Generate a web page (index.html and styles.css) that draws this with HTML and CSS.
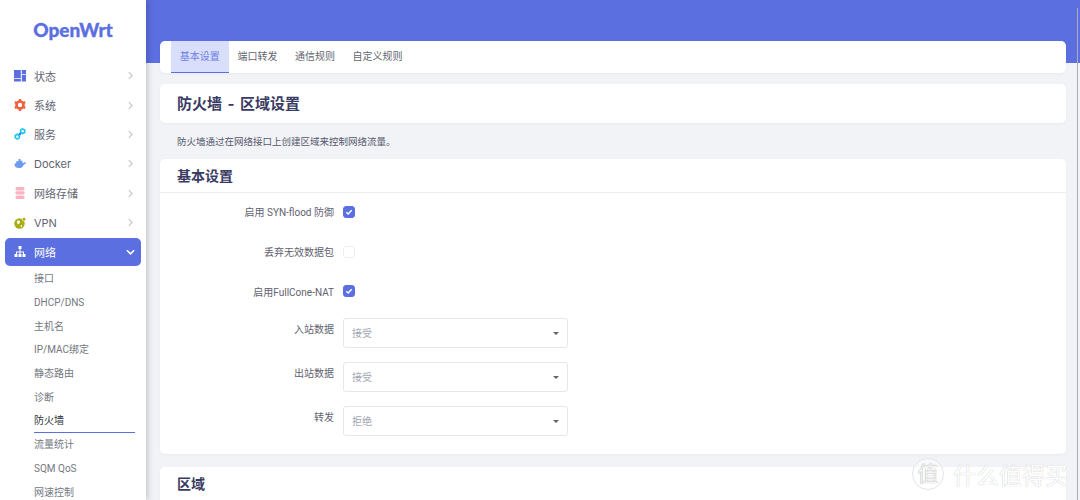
FILE: index.html
```html
<!DOCTYPE html>
<html lang="zh-CN">
<head>
    <meta charset="UTF-8">
    <meta name="viewport" content="width=device-width, initial-scale=1.0">
    <title>防火墙 - 区域设置 - OpenWrt</title>
    <link rel="stylesheet" href="styles.css">
</head>
<body>
    <aside class="sidebar">
        <div class="logo">OpenWrt</div>
        <ul class="menu">
            <li class="menu-item">
                <svg class="menu-icon" viewBox="0 0 12 12"><path fill="#5b6fe0" d="M0 0h6.800v8H0zM7.800 0H12v4H7.800zM7.800 4.800H12V11.500H7.800zM0 8.800h6.800v2.700H0z"/></svg>
                <span>状态</span>
                <svg class="chevron" viewBox="0 0 6 10"><path d="M1 1l4 4-4 4" fill="none" stroke="#c3c8d2" stroke-width="1.500"/></svg>
            </li>
            <li class="menu-item">
                <svg class="menu-icon" viewBox="0 0 12 12"><circle cx="6" cy="6" r="3.500" fill="none" stroke="#f2603c" stroke-width="2.600"/><path stroke="#f2603c" stroke-width="2.200" d="M6 0v2.500M6 9.500V12M0.800 3l2.200 1.300M9 7.700l2.200 1.300M0.800 9L3 7.700M9 4.300L11.200 3"/></svg>
                <span>系统</span>
                <svg class="chevron" viewBox="0 0 6 10"><path d="M1 1l4 4-4 4" fill="none" stroke="#c3c8d2" stroke-width="1.500"/></svg>
            </li>
            <li class="menu-item">
                <svg class="menu-icon" viewBox="0 0 12 12"><g fill="none" stroke="#22c8ec" stroke-width="1.700"><path d="M8.700.9l2 1.200v2.300l-2 1.200-2-1.200V2.100z"/><path d="M3.300 6.300l2 1.200v2.300l-2 1.200-2-1.200V7.500z"/></g><circle cx="6" cy="6" r="1.300" fill="#3b7de8"/></svg>
                <span>服务</span>
                <svg class="chevron" viewBox="0 0 6 10"><path d="M1 1l4 4-4 4" fill="none" stroke="#c3c8d2" stroke-width="1.500"/></svg>
            </li>
            <li class="menu-item">
                <svg class="menu-icon" viewBox="0 0 12 12"><path fill="#6b9bf0" d="M4.500 1h2v1.800h2V5h1c.4-.7 1.200-1 2.500-.6-.3 1.300-1 2-2.200 2C9.300 8.800 7.300 10 5 10 2 10 .5 8.500.3 5.500h1.900V3.200h2.300z"/></svg>
                <span>Docker</span>
                <svg class="chevron" viewBox="0 0 6 10"><path d="M1 1l4 4-4 4" fill="none" stroke="#c3c8d2" stroke-width="1.500"/></svg>
            </li>
            <li class="menu-item">
                <svg class="menu-icon" viewBox="0 0 12 12"><g fill="#f7b3c2"><rect x="1.500" y="0" width="9" height="3.400" rx="1.500"/><rect x="1.500" y="4.200" width="9" height="3.400" rx="1"/><rect x="1.500" y="8.400" width="9" height="3.600" rx="1.500"/></g></svg>
                <span>网络存储</span>
                <svg class="chevron" viewBox="0 0 6 10"><path d="M1 1l4 4-4 4" fill="none" stroke="#c3c8d2" stroke-width="1.500"/></svg>
            </li>
            <li class="menu-item">
                <svg class="menu-icon" viewBox="0 0 12 12"><circle cx="5.500" cy="6.500" r="5.200" fill="#a8ad14"/><path fill="#fff" d="M3 3.500l3 .5-.5 2.500-2 1zM6.500 8l2 .5-1.500 2z"/><circle cx="10" cy="2.200" r="1.800" fill="#a8ad14" stroke="#fff" stroke-width=".6"/></svg>
                <span>VPN</span>
                <svg class="chevron" viewBox="0 0 6 10"><path d="M1 1l4 4-4 4" fill="none" stroke="#c3c8d2" stroke-width="1.500"/></svg>
            </li>
            <li class="menu-item active">
                <svg class="menu-icon" viewBox="0 0 12 12"><path fill="#fff" d="M4.500 0h3v3h-3zM5.500 3h1v2.500H10V8H9V6.500H6.500V8h-1V6.500H3V8H2V5.500h3.500zM0.500 8h3v3h-3zM4.500 8h3v3h-3zM8.500 8h3v3h-3z"/></svg>
                <span>网络</span>
                <svg class="chevron" viewBox="0 0 10 6"><path d="M1 1l4 4 4-4" fill="none" stroke="#fff" stroke-width="1.800"/></svg>
            </li>
        </ul>
        <ul class="submenu">
            <li>接口</li>
            <li>DHCP/DNS</li>
            <li>主机名</li>
            <li>IP/MAC绑定</li>
            <li>静态路由</li>
            <li>诊断</li>
            <li class="current">防火墙</li>
            <li>流量统计</li>
            <li>SQM QoS</li>
            <li>网速控制</li>
        </ul>
    </aside>

    <main class="main">
        <nav class="card tabs">
            <a class="tab selected">基本设置</a>
            <a class="tab">端口转发</a>
            <a class="tab">通信规则</a>
            <a class="tab">自定义规则</a>
        </nav>

        <h1 class="card page-title">防火墙 - 区域设置</h1>
        <p class="page-desc">防火墙通过在网络接口上创建区域来控制网络流量。</p>

        <section class="card settings">
            <h2 class="section-title">基本设置</h2>
            <div class="form">
                <div class="row check-row">
                    <label class="row-label">启用 SYN-flood 防御</label>
                    <span class="checkbox checked"><svg viewBox="0 0 12 12"><path d="M2.800 6.200l2.200 2.200 4.200-4.600" fill="none" stroke="#fff" stroke-width="1.800"/></svg></span>
                </div>
                <div class="row check-row">
                    <label class="row-label">丢弃无效数据包</label>
                    <span class="checkbox"></span>
                </div>
                <div class="row check-row">
                    <label class="row-label">启用FullCone-NAT</label>
                    <span class="checkbox checked"><svg viewBox="0 0 12 12"><path d="M2.800 6.200l2.200 2.200 4.200-4.600" fill="none" stroke="#fff" stroke-width="1.800"/></svg></span>
                </div>
                <div class="row select-row">
                    <label class="row-label">入站数据</label>
                    <div class="select">接受<i class="caret"></i></div>
                </div>
                <div class="row select-row">
                    <label class="row-label">出站数据</label>
                    <div class="select">接受<i class="caret"></i></div>
                </div>
                <div class="row select-row">
                    <label class="row-label">转发</label>
                    <div class="select">拒绝<i class="caret"></i></div>
                </div>
            </div>
        </section>

        <section class="card settings">
            <h2 class="section-title">区域</h2>
        </section>
    </main>

    <div class="scrollbar"></div>

    <!-- watermark sits over the page -->
    <div class="watermark">
        <span class="watermark-badge">值</span>
        <span class="watermark-text">什么值得买</span>
    </div>
</body>
</html>
```

FILE: styles.css
```css
* {
    box-sizing: border-box;
}

html, body {
    height: 100%;
}

body {
    margin: 0;
    display: flex;
    overflow: hidden;
    font-family: Inter, "Noto Sans CJK SC", sans-serif;
    font-size: 11px;
    color: #4d4f5c;
    background-color: #f2f3f6;
}

ul {
    list-style: none;
    margin: 0;
    padding: 0;
}

/* sidebar */
.sidebar {
    flex: 0 0 146px;
    height: 500px;
    padding: 0 5px;
    background-color: white;
    box-shadow: 2px 0 6px rgba(0, 0, 0, 0.18);
    position: relative;
    z-index: 1;
}

.logo {
    height: 61px;
    padding-top: 16px;
    text-align: center;
    font-family: Lato, sans-serif;
    font-size: 19px;
    font-weight: 900;
    line-height: 28px;
    color: #5b6fe0;
    -webkit-text-stroke: 0.300px #5b6fe0;
}

.menu-item {
    display: flex;
    align-items: center;
    height: 29.400px;
    padding: 0 8px 0 9px;
    color: #5f6470;
}

.menu-item span {
    flex: 1;
    margin-left: 8px;
}

.menu-icon {
    width: 12px;
    height: 12px;
}

.chevron {
    width: 5px;
    height: 9px;
}

.menu-item.active {
    height: 28px;
    margin-top: 1px;
    border-radius: 5px;
    background-color: #5b6fe0;
    color: white;
}

.menu-item.active .chevron {
    width: 9px;
    height: 6px;
    margin-right: -2px;
}

.submenu {
    padding: 1px 6px 0 29px;
}

.submenu li {
    height: 23.700px;
    line-height: 24px;
    font-family: Roboto, "Noto Sans CJK SC", sans-serif;
    color: #74777f;
    font-size: 10px;
}

.submenu li.current {
    color: #33353d;
    border-bottom: 1px solid #5b6fe0;
}

/* main */
.main {
    flex: 1;
    height: 500px;
    padding: 41px 14px 0;
    background: linear-gradient(#5b6fe0 63px, #f2f3f6 63px);
}

.card {
    background-color: white;
    border-radius: 5px;
    box-shadow: 0 1px 3px rgba(0, 0, 0, 0.04);
}

.tabs {
    display: flex;
    height: 32px;
    padding-left: 11px;
}

.tab {
    padding: 0 8.800px;
    line-height: 31px;
    font-size: 10px;
    color: #62656f;
}

.tab.selected {
    color: #6d80e6;
    background-color: #d9defb;
    border-bottom: 1px solid #5b6fe0;
}

.page-title {
    height: 39px;
    margin: 11px 0 0;
    padding: 0 17px;
    font-size: 15px;
    font-weight: 700;
    line-height: 39px;
    word-spacing: 2px;
    color: #3a3b63;
}

.page-desc {
    height: 36px;
    margin: 0;
    padding: 0 17px;
    font-size: 9.500px;
    line-height: 37px;
    color: #55586e;
}

.settings {
    padding-bottom: 4px;
    margin-bottom: 13px;
}

.section-title {
    height: 34px;
    margin: 0;
    padding: 0 17px;
    font-size: 14px;
    font-weight: 700;
    line-height: 33px;
    color: #3a3b63;
    border-bottom: 1px solid #ececf1;
}

.row {
    display: flex;
    align-items: center;
}

.row-label {
    flex: 0 0 174px;
    text-align: right;
    margin-right: 9px;
    font-family: Roboto, "Noto Sans CJK SC", sans-serif;
    font-size: 10px;
    color: #5f6270;
}

.form {
    margin-top: -1px;
}

.check-row {
    height: 39.800px;
}

.checkbox {
    width: 12px;
    height: 12px;
    border: 1px solid #eceef2;
    border-radius: 3px;
    background-color: white;
}

.checkbox.checked {
    border-color: #5b6fe0;
    background-color: #5b6fe0;
}

.checkbox svg {
    display: block;
    width: 10px;
    height: 10px;
}

.select-row {
    height: 44px;
    align-items: flex-start;
}

.check-row + .select-row {
    margin-top: 7px;
}

.select-row .row-label {
    line-height: 24px;
}

.select {
    position: relative;
    width: 225px;
    height: 30px;
    padding-left: 8px;
    line-height: 29px;
    font-size: 10px;
    color: #a1a7b3;
    background-color: white;
    border: 1px solid #e6e7ec;
    border-radius: 3px;
}

.caret {
    position: absolute;
    right: 8px;
    top: 13px;
    border-left: 3px solid transparent;
    border-right: 3px solid transparent;
    border-top: 3px solid #60646e;
}

.scrollbar {
    position: absolute;
    top: 8px;
    right: 2px;
    width: 1px;
    height: 492px;
    background-color: #a9abb5;
}

.watermark {
    position: absolute;
    left: 912px;
    top: 457px;
    display: flex;
    align-items: center;
    gap: 9px;
    color: white;
}

.watermark-badge {
    width: 32px;
    height: 32px;
    border-radius: 50%;
    border: 1px solid #e4e5e8;
    font-size: 21px;
    line-height: 29px;
    text-align: center;
    color: #f4f4f4;
    text-shadow: 0 0 1px #8a8a8a;
    background-color: rgba(255, 255, 255, 0.5);
}

.watermark-text {
    font-size: 23px;
    text-shadow: 0 0 1px #b0b0b0;
}
```
